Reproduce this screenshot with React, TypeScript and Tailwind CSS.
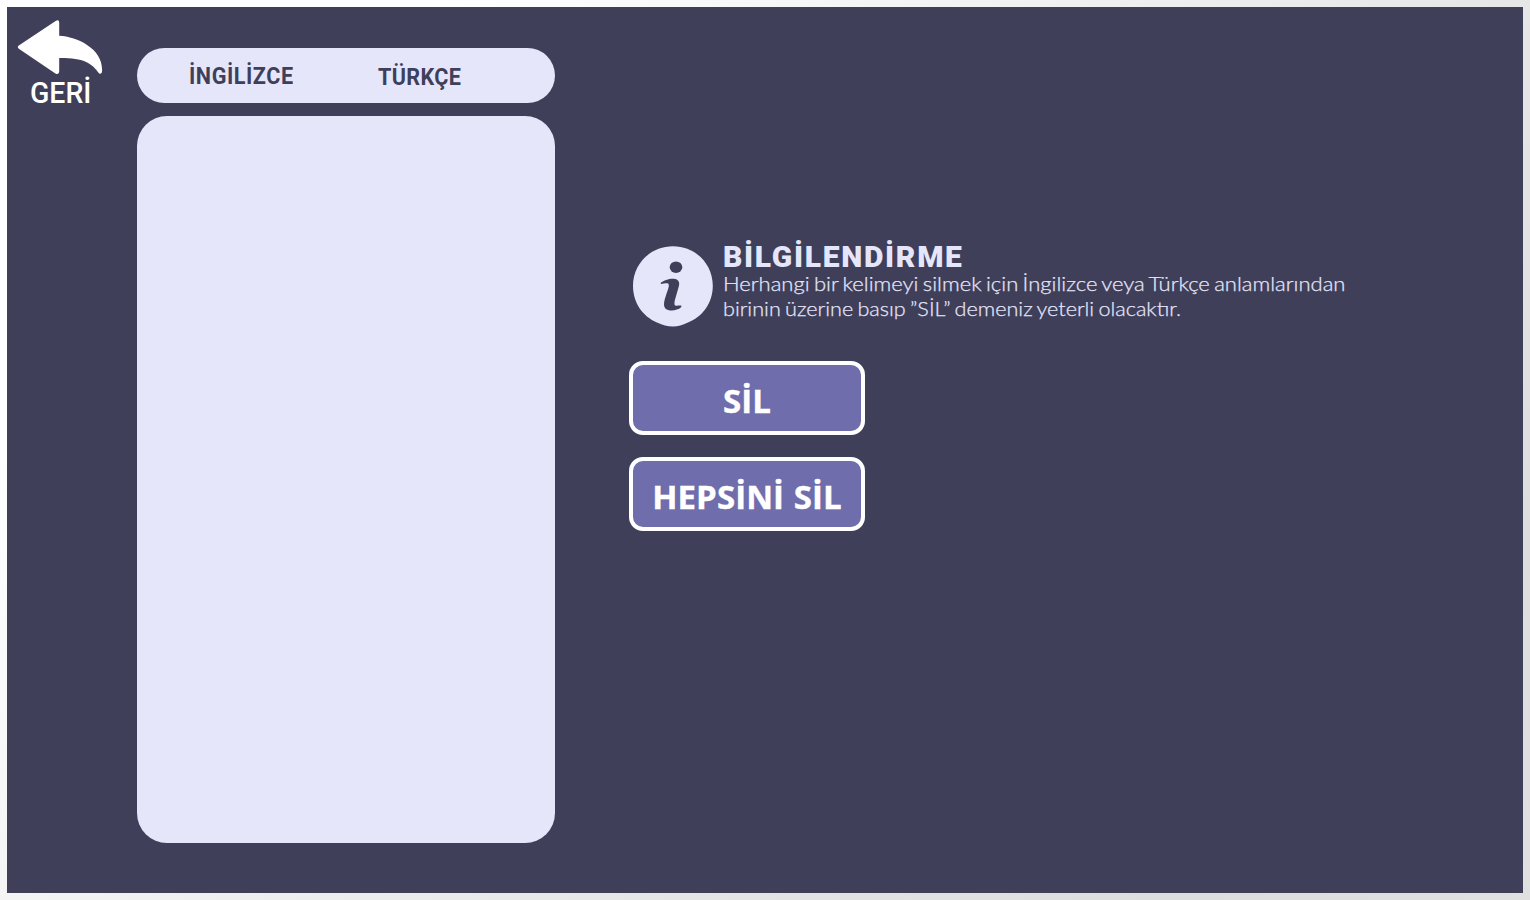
import React from "react";

function BackArrow() {
  return (
    <svg className="ml-[10px] block h-[56px] w-[86px]" viewBox="0 0 86 56" fill="#fff">
      <path d="M1.8 26.4 L38.6 2 Q42 0 42.2 3.4 V16.8 C61 17.8 87 30.5 85 53 Q84.4 55.4 82.2 54.6 C74.5 43.5 66 38.8 42.2 39 V52.6 Q42 56 38.4 54.4 L1.8 29.8 Q-.2 28 1.8 26.4 Z" />
    </svg>
  );
}

function InfoIcon() {
  return (
    <svg className="mt-[8px] block h-[82px] w-[82px] shrink-0" viewBox="0 0 82 82">
      <path
        d="M41 1.3 C63 1.3 80.8 18.5 80.8 40.8 C80.8 58 70.5 72 56 77.4 C50 79.8 46.5 81.4 41 81.4 C35 81.4 31 79.8 25 77.4 C11 71.8 1 58 1 40.8 C1 18.5 19 1.3 41 1.3 Z"
        fill="#e5e6fa"
      />
      <ellipse cx="44" cy="22.2" rx="6.3" ry="5.8" fill="#3f3f5a" />
      <path
        d="M29 37.6 C33.5 33.8 46.8 30.8 47.2 38.4 C47.4 42.5 41.4 56.2 42.6 59.8 C43.2 61.6 46.5 60.4 49 60.6 Q50.2 61 48.8 62.6 C44.5 66.4 32 67.6 32 59.4 C32 53.2 37.3 43.5 36.8 39.8 C36.4 37 32 38.6 29.4 38.9 Q28 38.6 29 37.6 Z"
        fill="#3f3f5a"
      />
    </svg>
  );
}

function ActionButton({ children }: { children: React.ReactNode }) {
  return (
    <button className="flex h-[74px] w-[236px] items-center justify-center whitespace-nowrap rounded-[14px] border-4 border-white bg-[#6f6dac] pt-[4px] font-['Open_Sans',sans-serif] text-[33px] leading-none font-bold text-white [-webkit-text-stroke:0.4px_#fff]">
      <span className="inline-block tracking-[0.1px] [word-spacing:1px]">{children}</span>
    </button>
  );
}

export default function App() {
  return (
    <div className="h-[900px] w-[1530px] overflow-hidden bg-[linear-gradient(135deg,#ffffff_18%,#e6e6e6_63%,#dddddd_85%,#e0e0e0_100%)] p-[7px]">
      <div className="flex h-full w-full bg-[#3f3f5a]">
        <div className="w-[130px] shrink-0 pt-[12px]">
          <BackArrow />
          <div className="ml-[23px] pt-[2px] font-[Roboto,sans-serif] text-[29px] leading-[32px] font-medium text-white">
            <span className="inline-block origin-left scale-x-[0.98]">GERİ</span>
          </div>
        </div>

        <div className="flex w-[418px] shrink-0 flex-col gap-[13px] pt-[41px]">
          <div className="flex h-[55px] rounded-[28px] bg-[#e5e6fa] pt-px font-[Roboto,sans-serif] text-[24px] leading-[54px] font-bold whitespace-nowrap text-[#3f3f5a]">
            <div className="w-[241px] pl-[52px]">
              <span className="inline-block origin-left scale-x-[0.9] tracking-[0.6px]">İNGİLİZCE</span>
            </div>
            <div className="pt-px">
              <span className="inline-block origin-left scale-x-[0.9] tracking-[0.4px]">TÜRKÇE</span>
            </div>
          </div>
          <div className="h-[727px] rounded-[30px] bg-[#e5e6fa]" />
        </div>

        <div className="ml-[74px] pt-[230px]">
          <div className="flex pl-[3px] text-[#e5e6fa]">
            <InfoIcon />
            <div className="ml-[9px] whitespace-nowrap">
              <h1 className="pt-[4px] font-[Roboto,sans-serif] text-[30px] leading-[32px] font-black">
                <span className="tracking-[1.7px]">BİLGİLENDİRME</span>
              </h1>
              <div className="-mt-[2px] font-[Lato,sans-serif] text-[20px] leading-[25px] font-light [-webkit-text-stroke:0.25px_#e5e6fa] [word-spacing:-1.5px]">
                <div>
                  <span className="inline-block origin-left scale-x-[1.101]">
                    Herhangi bir kelimeyi silmek için İngilizce veya Türkçe anlamlarından
                  </span>
                </div>
                <div>
                  <span className="inline-block origin-left scale-x-[1.081]">
                    birinin üzerine basıp ”SİL” demeniz yeterli olacaktır.
                  </span>
                </div>
              </div>
            </div>
          </div>
          <div className="mt-[34px] flex flex-col gap-[22px]">
            <ActionButton>SİL</ActionButton>
            <ActionButton>HEPSİNİ SİL</ActionButton>
          </div>
        </div>
      </div>
    </div>
  );
}
